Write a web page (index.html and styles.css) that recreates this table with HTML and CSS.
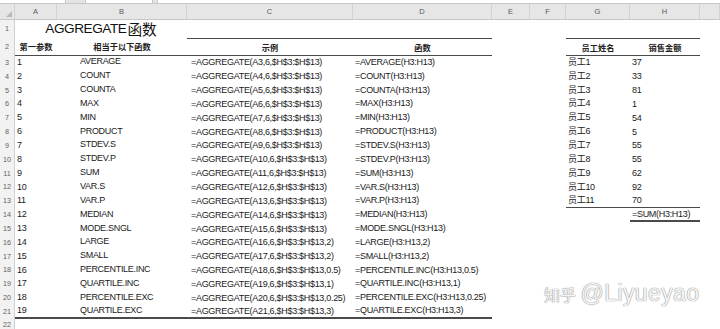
FILE: index.html
```html
<!DOCTYPE html>
<html>
<head>
<meta charset="utf-8">
<link rel="stylesheet" href="styles.css">
</head>
<body>
<div class="sheet">
  <div class="toolbar"><span class="box b1"></span><span class="box b2"></span><span class="box b3"></span></div>
  <div class="row colhead">
    <div class="corner"><svg width="6" height="6" viewBox="0 0 6 6"><path d="M6 0 L6 6 L0 6 Z" fill="#b8b8b8"/></svg></div>
    <div class="ch">A</div><div class="ch">B</div><div class="ch">C</div><div class="ch">D</div><div class="ch">E</div><div class="ch">F</div><div class="ch">G</div><div class="ch">H</div><div class="ch"></div>
  </div>
  <div class="row r1">
    <div class="rh">1</div>
    <div class="title"><span class="lat">AGGREGATE</span><span class="cjk">函数</span></div>
    <div></div><div></div><div></div><div></div><div></div><div></div><div></div>
  </div>
  <div class="row r2">
    <div class="rh">2</div>
    <div class="hd bb">第一参数</div>
    <div class="hd bb">相当于以下函数</div>
    <div class="hd bt bb">示例</div>
    <div class="hd bt bb">函数</div>
    <div></div><div></div>
    <div class="hd bt bb">员工姓名</div>
    <div class="hd bt bb">销售金额</div>
    <div></div>
  </div>
  <div class="row data"><div class="rh">3</div><div class="a">1</div><div class="b">AVERAGE</div><div class="c">=AGGREGATE(A3,6,$H$3:$H$13)</div><div class="d">=AVERAGE(H3:H13)</div><div></div><div></div><div class="g">员工1</div><div class="h">37</div><div></div></div>
  <div class="row data"><div class="rh">4</div><div class="a">2</div><div class="b">COUNT</div><div class="c">=AGGREGATE(A4,6,$H$3:$H$13)</div><div class="d">=COUNT(H3:H13)</div><div></div><div></div><div class="g">员工2</div><div class="h">33</div><div></div></div>
  <div class="row data"><div class="rh">5</div><div class="a">3</div><div class="b">COUNTA</div><div class="c">=AGGREGATE(A5,6,$H$3:$H$13)</div><div class="d">=COUNTA(H3:H13)</div><div></div><div></div><div class="g">员工3</div><div class="h">81</div><div></div></div>
  <div class="row data"><div class="rh">6</div><div class="a">4</div><div class="b">MAX</div><div class="c">=AGGREGATE(A6,6,$H$3:$H$13)</div><div class="d">=MAX(H3:H13)</div><div></div><div></div><div class="g">员工4</div><div class="h">1</div><div></div></div>
  <div class="row data"><div class="rh">7</div><div class="a">5</div><div class="b">MIN</div><div class="c">=AGGREGATE(A7,6,$H$3:$H$13)</div><div class="d">=MIN(H3:H13)</div><div></div><div></div><div class="g">员工5</div><div class="h">54</div><div></div></div>
  <div class="row data"><div class="rh">8</div><div class="a">6</div><div class="b">PRODUCT</div><div class="c">=AGGREGATE(A8,6,$H$3:$H$13)</div><div class="d">=PRODUCT(H3:H13)</div><div></div><div></div><div class="g">员工6</div><div class="h">5</div><div></div></div>
  <div class="row data"><div class="rh">9</div><div class="a">7</div><div class="b">STDEV.S</div><div class="c">=AGGREGATE(A9,6,$H$3:$H$13)</div><div class="d">=STDEV.S(H3:H13)</div><div></div><div></div><div class="g">员工7</div><div class="h">55</div><div></div></div>
  <div class="row data"><div class="rh">10</div><div class="a">8</div><div class="b">STDEV.P</div><div class="c">=AGGREGATE(A10,6,$H$3:$H$13)</div><div class="d">=STDEV.P(H3:H13)</div><div></div><div></div><div class="g">员工8</div><div class="h">55</div><div></div></div>
  <div class="row data"><div class="rh">11</div><div class="a">9</div><div class="b">SUM</div><div class="c">=AGGREGATE(A11,6,$H$3:$H$13)</div><div class="d">=SUM(H3:H13)</div><div></div><div></div><div class="g">员工9</div><div class="h">62</div><div></div></div>
  <div class="row data"><div class="rh">12</div><div class="a">10</div><div class="b">VAR.S</div><div class="c">=AGGREGATE(A12,6,$H$3:$H$13)</div><div class="d">=VAR.S(H3:H13)</div><div></div><div></div><div class="g">员工10</div><div class="h">92</div><div></div></div>
  <div class="row data"><div class="rh">13</div><div class="a">11</div><div class="b">VAR.P</div><div class="c">=AGGREGATE(A13,6,$H$3:$H$13)</div><div class="d">=VAR.P(H3:H13)</div><div></div><div></div><div class="g bb">员工11</div><div class="h bb">70</div><div></div></div>
  <div class="row data"><div class="rh">14</div><div class="a">12</div><div class="b">MEDIAN</div><div class="c">=AGGREGATE(A14,6,$H$3:$H$13)</div><div class="d">=MEDIAN(H3:H13)</div><div></div><div></div><div class="g"></div><div class="h bb2">=SUM(H3:H13)</div><div></div></div>
  <div class="row data"><div class="rh">15</div><div class="a">13</div><div class="b">MODE.SNGL</div><div class="c">=AGGREGATE(A15,6,$H$3:$H$13)</div><div class="d">=MODE.SNGL(H3:H13)</div><div></div><div></div><div></div><div></div><div></div></div>
  <div class="row data"><div class="rh">16</div><div class="a">14</div><div class="b">LARGE</div><div class="c">=AGGREGATE(A16,6,$H$3:$H$13,2)</div><div class="d">=LARGE(H3:H13,2)</div><div></div><div></div><div></div><div></div><div></div></div>
  <div class="row data"><div class="rh">17</div><div class="a">15</div><div class="b">SMALL</div><div class="c">=AGGREGATE(A17,6,$H$3:$H$13,2)</div><div class="d">=SMALL(H3:H13,2)</div><div></div><div></div><div></div><div></div><div></div></div>
  <div class="row data"><div class="rh">18</div><div class="a">16</div><div class="b">PERCENTILE.INC</div><div class="c">=AGGREGATE(A18,6,$H$3:$H$13,0.5)</div><div class="d">=PERCENTILE.INC(H3:H13,0.5)</div><div></div><div></div><div></div><div></div><div></div></div>
  <div class="row data"><div class="rh">19</div><div class="a">17</div><div class="b">QUARTILE.INC</div><div class="c">=AGGREGATE(A19,6,$H$3:$H$13,1)</div><div class="d">=QUARTILE.INC(H3:H13,1)</div><div></div><div></div><div></div><div></div><div></div></div>
  <div class="row data"><div class="rh">20</div><div class="a">18</div><div class="b">PERCENTILE.EXC</div><div class="c">=AGGREGATE(A20,6,$H$3:$H$13,0.25)</div><div class="d">=PERCENTILE.EXC(H3:H13,0.25)</div><div></div><div></div><div></div><div></div><div></div></div>
  <div class="row data"><div class="rh">21</div><div class="a bb2">19</div><div class="b bb2">QUARTILE.EXC</div><div class="c bb2">=AGGREGATE(A21,6,$H$3:$H$13,3)</div><div class="d bb2">=QUARTILE.EXC(H3:H13,3)</div><div></div><div></div><div></div><div></div><div></div></div>
  <div class="row data last"><div class="rh">22</div><div></div><div></div><div></div><div></div><div></div><div></div><div></div><div></div><div></div></div>
</div>
<div class="watermark"><span class="wm-cjk">知乎</span> <span class="wm-lat">@Liyueyao</span></div>
</body>
</html>
```
FILE: styles.css
```css
html, body {
  margin: 0;
  padding: 0;
  background: #ffffff;
  overflow: hidden;
}
body {
  width: 720px;
  height: 329px;
  position: relative;
  font-family: "Liberation Sans", "Noto Sans CJK SC", sans-serif;
  color: #1a1a1a;
}
.sheet {
  display: flex;
  flex-direction: column;
}
.toolbar {
  height: 4px;
  background: #e4e4e4;
  display: flex;
  border-bottom: 1px solid #c8c8c8;
  box-sizing: border-box;
}
.box {
  display: block;
  height: 3px;
  background: #ffffff;
  border-right: 1px solid #c8c8c8;
  border-left: 1px solid #c8c8c8;
  box-sizing: border-box;
}
.b1 { width: 66px; border-left: none; }
.b2 { width: 68px; margin-left: 19px; }
.b3 { flex: 1; margin-left: 4px; border-right: none; }

.row {
  display: grid;
  grid-template-columns: 15px 42px 130px 166px 139px 38px 36px 64px 70px 20px;
  height: 13.85px;
  font-size: 9px;
  letter-spacing: -0.3px;
  line-height: 1;
}
.row > div {
  display: flex;
  align-items: center;
  white-space: nowrap;
  box-sizing: border-box;
  min-width: 0;
}
.colhead {
  height: 15.5px;
  background: #e6e6e6;
  border-bottom: 1px solid #c6c6c6;
  box-sizing: border-box;
  letter-spacing: 0;
}
.colhead > div {
  border-right: 1px solid #d2d2d2;
}
.ch {
  justify-content: center;
  color: #5a5a5a;
  font-size: 7.5px;
}
.corner {
  justify-content: flex-end;
  align-items: flex-end !important;
  padding: 0 2px 2px 0;
}
.rh {
  background: #f2f2f2;
  border-right: 1px solid #d0d0d0;
  justify-content: center;
  color: #5f5f5f;
  font-size: 7.2px;
  letter-spacing: 0;
}
.last .rh {
  align-items: flex-start !important;
  padding-top: 2px;
}
.r1 { height: 18.5px; }
.r2 { height: 17.5px; }
.title {
  grid-column: span 2;
  justify-content: center;
  color: #111;
  padding-top: 1px;
  letter-spacing: 0;
}
.title .lat {
  font-size: 13.6px;
  letter-spacing: -0.45px;
}
.title .cjk {
  font-family: "Noto Sans CJK SC", sans-serif;
  font-size: 14.6px;
  font-weight: 400;
  margin-left: 1px;
}
.hd {
  justify-content: center;
  font-family: "Noto Sans CJK SC", sans-serif;
  font-weight: 700;
  font-size: 8.2px;
  letter-spacing: 0;
  color: #222;
}
.bt { border-top: 1px solid #4a4a4a; }
.bb { border-bottom: 1px solid #4a4a4a; }
.bb2 { border-bottom: 2px solid #4a4a4a; }
.a { padding-left: 2px; }
.b { padding-left: 23px; padding-bottom: 1px; }
.c { padding-left: 4px; padding-top: 1px; }
.d { padding-left: 2px; }
.g { padding-left: 2px; }
.h { padding-left: 2px; padding-top: 1px; }

.watermark {
  position: absolute;
  left: 544px;
  top: 282px;
  white-space: nowrap;
  color: #f4f4f4;
  text-shadow: 0 0 1px #8a8a8a, 0 0 1px #8a8a8a;
  line-height: 1;
}
.wm-cjk {
  font-family: "Noto Sans CJK SC", sans-serif;
  font-size: 16px;
}
.wm-lat {
  font-family: "Liberation Sans", sans-serif;
  font-size: 23px;
  letter-spacing: 0.4px;
}
```
